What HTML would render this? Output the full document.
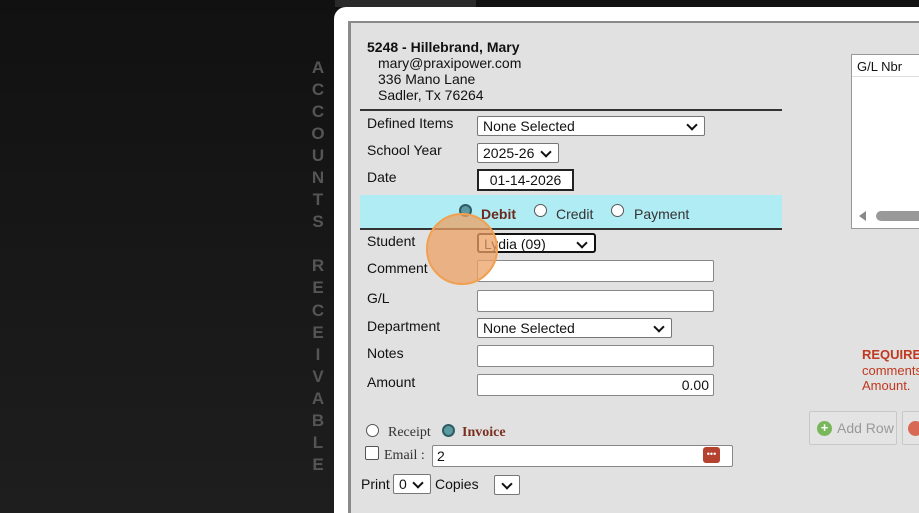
<!DOCTYPE html>
<html style="width:919px;height:513px;overflow:hidden;background:#1e1e1e"><head><style>
*{box-sizing:border-box;margin:0;padding:0}
body{width:919px;height:513px;overflow:hidden;background:linear-gradient(#111,#1e1e1e);font-family:"Liberation Sans",sans-serif;position:relative;font-size:14px;color:#111}
.a{position:absolute}
.side{left:308px;top:57px;width:20px;text-align:center;color:#555;font-weight:bold;font-size:17px;line-height:22.05px}
.panel{left:334px;top:7px;width:600px;height:506px;background:#fff;border-radius:12px 0 0 0}
.inner{left:348px;top:21px;width:580px;height:492px;background:#e1e1e1;border-left:3px solid #8a8a8a;border-top:2px solid #8a8a8a}
.lbl{font-size:14px;left:367px}
.sel{background:#fff;border:1px solid #777;border-radius:2px;height:20px;font-size:14px;padding:1px 5px;line-height:16px}
.sel:after{content:"";position:absolute;right:8px;top:4px;width:6px;height:6px;border-right:2px solid #111;border-bottom:2px solid #111;transform:rotate(45deg)}
.inp{background:#fff;border:1px solid #888;border-radius:2px;height:22px}
.rad{width:13px;height:13px;border:1px solid #555;border-radius:50%;background:#fff}
.radon{width:13px;height:13px;border-radius:50%;background:#5a9aa0;border:2px solid #2f5d63}
.hr{left:360px;width:422px;height:2px;background:#333}
</style></head><body>
<div class="a" style="left:335px;top:0;width:141px;height:7px;background:#2a2a2a"></div>
<div class="a side">A<br>C<br>C<br>O<br>U<br>N<br>T<br>S<br><br>R<br>E<br>C<br>E<br>I<br>V<br>A<br>B<br>L<br>E</div>
<div class="a panel"></div>
<div class="a inner"></div>
<div class="a" style="left:367px;top:39px;font-weight:bold;font-size:14px">5248 - Hillebrand, Mary</div>
<div class="a" style="left:378px;top:55px;line-height:16px">mary@praxipower.com<br>336 Mano Lane<br>Sadler, Tx 76264</div>
<div class="a hr" style="top:109px"></div>
<div class="a lbl" style="top:115px">Defined Items</div>
<div class="a sel" style="left:477px;top:116px;width:228px">None Selected</div>
<div class="a lbl" style="top:142px">School Year</div>
<div class="a sel" style="left:477px;top:143px;width:82px">2025-26</div>
<div class="a lbl" style="top:169px">Date</div>
<div class="a" style="left:477px;top:169px;width:97px;height:22px;background:#fff;border:2px solid #222;text-align:center;line-height:18px">01-14-2026</div>
<div class="a" style="left:360px;top:195px;width:422px;height:33px;background:#b0ecf4"></div>
<div class="a radon" style="left:459px;top:204px"></div>
<div class="a" style="left:481px;top:206px;font-weight:bold;color:#6b2a1e">Debit</div>
<div class="a rad" style="left:534px;top:204px"></div>
<div class="a" style="left:556px;top:206px;color:#333">Credit</div>
<div class="a rad" style="left:611px;top:204px"></div>
<div class="a" style="left:634px;top:206px;color:#333">Payment</div>
<div class="a hr" style="top:228px"></div>
<div class="a lbl" style="top:233px">Student</div>
<div class="a sel" style="left:477px;top:233px;width:119px;border:2px solid #111;border-radius:3px">Lydia (09)</div>
<div class="a lbl" style="top:260px">Comment</div>
<div class="a inp" style="left:477px;top:260px;width:237px"></div>
<div class="a lbl" style="top:290px">G/L</div>
<div class="a inp" style="left:477px;top:290px;width:237px"></div>
<div class="a lbl" style="top:318px">Department</div>
<div class="a sel" style="left:477px;top:318px;width:195px">None Selected</div>
<div class="a lbl" style="top:345px">Notes</div>
<div class="a inp" style="left:477px;top:345px;width:237px"></div>
<div class="a lbl" style="top:374px">Amount</div>
<div class="a inp" style="left:477px;top:374px;width:237px;text-align:right;padding-right:4px;line-height:20px">0.00</div>
<div class="a" style="left:426px;top:213px;width:72px;height:72px;border-radius:50%;background:rgba(236,160,100,.75);border:2px solid #f0a050"></div>
<div class="a rad" style="left:366px;top:424px"></div>
<div class="a" style="left:388px;top:425px;font-family:'Liberation Serif',serif;color:#333">Receipt</div>
<div class="a radon" style="left:442px;top:424px"></div>
<div class="a" style="left:462px;top:425px;font-family:'Liberation Serif',serif;font-weight:bold;color:#7a3020">Invoice</div>
<div class="a" style="left:365px;top:446px;width:14px;height:14px;border:1px solid #555;border-radius:2px;background:#fff"></div>
<div class="a" style="left:384px;top:448px;font-family:'Liberation Serif',serif;color:#333">Email :</div>
<div class="a inp" style="left:432px;top:445px;width:301px;padding-left:4px;line-height:20px">2</div>
<div class="a" style="left:703px;top:447px;width:17px;height:16px;background:#b5412f;border-radius:3px;color:#fff;font-size:9px;text-align:center;line-height:14px">•••</div>
<div class="a" style="left:361px;top:476px">Print</div>
<div class="a sel" style="left:393px;top:474px;width:38px">0</div>
<div class="a" style="left:435px;top:476px">Copies</div>
<div class="a sel" style="left:494px;top:475px;width:26px"></div>
<div class="a" style="left:851px;top:54px;width:80px;height:175px;background:#fff;border:1px solid #999"></div>
<div class="a" style="left:857px;top:59px;font-size:13px">G/L Nbr</div>
<div class="a" style="left:852px;top:76px;width:70px;height:1px;background:#ddd"></div>
<div class="a" style="left:859px;top:211px;width:0;height:0;border-top:5px solid transparent;border-bottom:5px solid transparent;border-right:7px solid #888"></div>
<div class="a" style="left:876px;top:211px;width:50px;height:10px;border-radius:5px;background:#999"></div>
<div class="a" style="left:862px;top:347px;color:#c0391f;font-weight:bold;font-size:13px">REQUIRED</div>
<div class="a" style="left:862px;top:363px;color:#c0391f;font-size:13px;line-height:15px">comments<br>Amount.</div>
<div class="a" style="left:809px;top:411px;width:88px;height:34px;border:1px solid #c8c8c8;border-radius:2px;background:#e4e4e4"></div>
<div class="a" style="left:817px;top:421px;width:15px;height:15px;border-radius:50%;background:#79b85a;color:#fff;font-size:13px;line-height:14px;text-align:center;font-weight:bold">+</div>
<div class="a" style="left:837px;top:420px;color:#999;font-size:14px">Add Row</div>
<div class="a" style="left:902px;top:411px;width:30px;height:34px;border:1px solid #c8c8c8;border-radius:2px;background:#e4e4e4"></div>
<div class="a" style="left:908px;top:421px;width:15px;height:15px;border-radius:50%;background:#d86a55"></div>
</body></html>
